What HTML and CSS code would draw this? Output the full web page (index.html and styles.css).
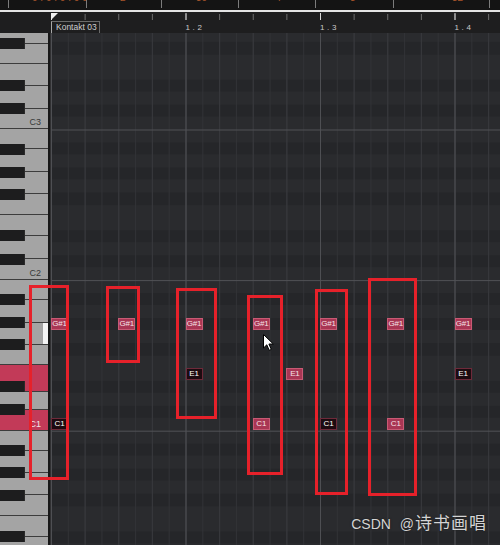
FILE: index.html
```html
<!DOCTYPE html>
<html>
<head>
<meta charset="utf-8">
<link rel="stylesheet" href="styles.css">
</head>
<body>
<div class="app">
  <div class="topbar">
    <div class="tcell w9"></div>
    <div class="tcell w78"><span class="otext p23">0 . 0 . 0 . 0 0</span></div>
    <div class="tcell w75"><span class="otext p33">2</span></div>
    <div class="tcell w77"><span class="otext p34">30</span></div>
    <div class="tcell w77"><span class="otext p38">7</span></div>
    <div class="tcell w78"><span class="otext p34">3</span></div>
    <div class="tcell w96"><span class="otext p58">32</span></div>
    <div class="tcell last"></div>
  </div>
  <div class="hline"></div>
  <div class="ruler">
    <div class="ruler-left"></div>
    <div class="ruler-track">
      <div class="beat first">
        <div class="marker"></div>
        <div class="part-label">Kontakt 03</div>
      </div>
      <div class="beat"><span class="beat-num">1 . 2</span></div>
      <div class="beat"><span class="beat-num">1 . 3</span></div>
      <div class="beat"><span class="beat-num">1 . 4</span></div>
    </div>
  </div>
  <div class="main">
    <div class="keyboard">
      <div class="wk k-top"></div>
      <div class="wk k-f"></div>
      <div class="wk k-e"></div>
      <div class="wk k-d"></div>
      <div class="wk k-c"><span>C3</span></div>
      <div class="wk k-b"></div>
      <div class="wk k-a"></div>
      <div class="wk k-g"></div>
      <div class="wk k-f"></div>
      <div class="wk k-e"></div>
      <div class="wk k-d"></div>
      <div class="wk k-c"><span>C2</span></div>
      <div class="wk k-b"></div>
      <div class="wk k-a"></div>
      <div class="wk k-g"></div>
      <div class="wk k-f"></div>
      <div class="wk k-e1 pink"></div>
      <div class="wk k-d1"></div>
      <div class="wk k-c pink"><span>C1</span></div>
      <div class="wk k-b"></div>
      <div class="wk k-a"></div>
      <div class="wk k-g"></div>
      <div class="wk k-f"></div>
      <div class="wk k-e"></div>
      <div class="wk k-d"></div>

      <div class="bk" style="top:5px"></div>
      <div class="bk" style="top:47px"></div>
      <div class="bk" style="top:70px"></div>
      <div class="bk" style="top:111px"></div>
      <div class="bk" style="top:134px"></div>
      <div class="bk" style="top:156px"></div>
      <div class="bk" style="top:197px"></div>
      <div class="bk" style="top:221px"></div>
      <div class="bk" style="top:261px"></div>
      <div class="bk" style="top:284px"></div>
      <div class="bk" style="top:306px"></div>
      <div class="bk" style="top:348px"></div>
      <div class="bk" style="top:371px"></div>
      <div class="bk" style="top:412px"></div>
      <div class="bk" style="top:434px"></div>
      <div class="bk" style="top:457px"></div>
      <div class="bk" style="top:498px"></div>

      <div class="key-indicator"></div>
    </div>
    <div class="divider"></div>
    <div class="grid">
      <div class="note lit r-gs" style="left:0px">G#1</div>
      <div class="note lit r-gs" style="left:67.25px">G#1</div>
      <div class="note lit r-gs" style="left:134.5px">G#1</div>
      <div class="note lit r-gs" style="left:201.75px">G#1</div>
      <div class="note lit r-gs" style="left:269px">G#1</div>
      <div class="note lit r-gs" style="left:336.25px">G#1</div>
      <div class="note lit r-gs" style="left:403.5px">G#1</div>

      <div class="note dark r-e" style="left:134.5px">E1</div>
      <div class="note lit r-e" style="left:235.4px">E1</div>
      <div class="note dark r-e" style="left:403.5px">E1</div>

      <div class="note dark r-c" style="left:0px">C1</div>
      <div class="note lit r-c" style="left:201.75px">C1</div>
      <div class="note dark r-c" style="left:269px">C1</div>
      <div class="note lit r-c" style="left:336.25px">C1</div>

      <svg class="cursor" width="12" height="18" viewBox="0 0 12 18">
        <path d="M0.5 0.5 L0.5 14 L3.8 10.8 L6.2 16.3 L8.3 15.4 L5.9 10 L10.3 10 Z" fill="#ffffff" stroke="#000000" stroke-width="1" stroke-linejoin="miter"/>
      </svg>
    </div>

    <div class="anno" style="left:29px;top:252px;width:40px;height:195px"></div>
    <div class="anno" style="left:106px;top:253px;width:34px;height:77px"></div>
    <div class="anno" style="left:176px;top:255px;width:41px;height:131px"></div>
    <div class="anno" style="left:247px;top:262px;width:36px;height:180px"></div>
    <div class="anno" style="left:315px;top:256px;width:33px;height:206px"></div>
    <div class="anno" style="left:368px;top:245px;width:49px;height:218px"></div>

    <div class="watermark"><span class="wm-lat">CSDN @</span><span class="wm-cjk">诗书画唱</span></div>
  </div>
</div>
</body>
</html>
```

FILE: styles.css
```css
* { box-sizing: border-box; margin: 0; padding: 0; }

html, body {
  width: 500px;
  height: 545px;
  overflow: hidden;
  background: #1a1a1a;
}

body {
  font-family: "Liberation Sans", Arial, sans-serif;
}

.app {
  display: flex;
  flex-direction: column;
  width: 500px;
  height: 545px;
}

/* ---------- top transport strip ---------- */
.topbar {
  display: flex;
  flex: none;
  height: 10px;
  background: #141414;
  overflow: hidden;
}

.tcell {
  flex: none;
  height: 8px;
  overflow: hidden;
  border-right: 1px solid #7c7c7c;
}

.tcell.last { flex: 1; border-right: none; }
.w9 { width: 9px; }
.w75 { width: 75px; }
.w77 { width: 77px; }
.w78 { width: 78px; }
.w96 { width: 96px; }

.otext {
  display: block;
  margin-top: -7px;
  font-size: 10px;
  line-height: 10px;
  color: #a8552b;
  white-space: nowrap;
}

.p23 { padding-left: 23px; }
.p33 { padding-left: 33px; }
.p34 { padding-left: 34px; }
.p38 { padding-left: 38px; }
.p58 { padding-left: 58px; }

.hline {
  flex: none;
  height: 2px;
  background: #e4e4e4;
}

/* ---------- ruler ---------- */
.ruler {
  flex: none;
  display: flex;
  height: 21px;
  background: #1e1e1f;
}

.ruler-left {
  flex: none;
  width: 51px;
}

.ruler-track {
  flex: 1;
  display: flex;
  background-image:
    linear-gradient(to right, #d8d8d8 0 1px, transparent 1px),
    linear-gradient(to right, #6c6c6c 0 1px, transparent 1px);
  background-size: 134.5px 7px, 33.625px 6px;
  background-position: 0 1px, 0 2px;
  background-repeat: repeat-x, repeat-x;
}

.beat {
  flex: none;
  width: 134.5px;
  padding-top: 11px;
}

.beat-num {
  display: block;
  font-size: 8px;
  line-height: 9px;
  color: #cacaca;
  letter-spacing: 0.2px;
}

.beat.first {
  display: flex;
  flex-direction: column;
  padding-top: 1px;
}

.marker {
  width: 0;
  height: 0;
  border-top: 7px solid #f0f0f0;
  border-right: 7px solid transparent;
}

.part-label {
  margin-top: 1px;
  width: 49px;
  height: 12px;
  border: 1px solid #6a6a6a;
  border-left-color: #a8a8a8;
  border-bottom: none;
  padding-left: 4px;
  font-size: 8.5px;
  line-height: 11px;
  color: #cfcfcf;
  white-space: nowrap;
}

/* ---------- main editor ---------- */
.main {
  flex: 1;
  display: flex;
  position: relative;
  overflow: hidden;
}

.keyboard {
  flex: none;
  width: 48px;
  position: relative;
  display: flex;
  flex-direction: column;
  background: #a4a4a4;
  overflow: hidden;
}

.wk {
  flex: none;
  display: flex;
  justify-content: flex-end;
  align-items: flex-end;
  padding-right: 7px;
  padding-bottom: 1px;
  border-bottom: 1px solid #3c3c3c;
  font-size: 9px;
  line-height: 10px;
  color: #383838;
}

.k-top { height: 10.6px; }
.k-b { height: 20px; }
.k-a { height: 22.5px; }
.k-g { height: 22.2px; }
.k-f { height: 20.4px; }
.k-e { height: 21.7px; }
.k-d { height: 23px; }
.k-c { height: 20.8px; }
.k-e1 { height: 26.8px; }
.k-d1 { height: 17.9px; }

.wk.pink {
  background: #c23a58;
  color: #f3e4e7;
}

.bk {
  position: absolute;
  left: 0;
  width: 25px;
  height: 11px;
  background: #1d1d1e;
  border-right: 1px solid #2a2a2a;
}

.key-indicator {
  position: absolute;
  left: 43px;
  top: 290px;
  width: 5px;
  height: 21px;
  background: #f4f4f4;
}

.divider {
  flex: none;
  width: 3px;
  background: #171717;
  border-right: 1px solid #303032;
}

.grid {
  flex: 1;
  position: relative;
  background-color: #28292c;
  background-image:
    linear-gradient(to bottom, #505155 0 1px, transparent 1px),
    linear-gradient(to right, #4e4f53 0 1px, transparent 1px),
    linear-gradient(to right, #37383c 0 1px, transparent 1px),
    linear-gradient(to right, #313236 0 1px, transparent 1px),
    linear-gradient(to bottom,
      #2a2b2e 0 12.55px,
      #252629 12.55px 25.1px,
      #2a2b2e 25.1px 37.65px,
      #252629 37.65px 50.2px,
      #2a2b2e 50.2px 62.75px,
      #252629 62.75px 75.3px,
      #2a2b2e 75.3px 100.4px,
      #252629 100.4px 112.95px,
      #2a2b2e 112.95px 125.5px,
      #252629 125.5px 138.05px,
      #2a2b2e 138.05px 150.6px);
  background-size:
    100% 150.6px,
    134.5px 100%,
    33.625px 100%,
    16.8125px 100%,
    100% 150.6px;
  background-position:
    0 96.5px,
    0 0,
    0 0,
    0 0,
    0 96.5px;
}

/* ---------- notes ---------- */
.note {
  position: absolute;
  width: 17px;
  height: 12px;
  font-size: 8px;
  line-height: 10px;
  text-align: center;
  white-space: nowrap;
  letter-spacing: -0.2px;
}

.note.lit {
  background: #a93654;
  border: 1px solid #c85a74;
  color: #f6e2e7;
}

.note.dark {
  background: #1d0b10;
  border: 1px solid #6e2a3a;
  color: #ffffff;
}

.r-gs { top: 285px; }
.r-e { top: 335px; }
.r-c { top: 385px; }

.cursor {
  position: absolute;
  left: 212px;
  top: 301px;
}

/* ---------- annotations ---------- */
.anno {
  position: absolute;
  border: 3px solid #e6212a;
}

.watermark {
  position: absolute;
  right: 13px;
  bottom: 11px;
  display: flex;
  align-items: baseline;
  color: #d4d4d4;
  text-shadow: 0 0 2px rgba(0, 0, 0, 0.6);
  white-space: nowrap;
}

.wm-lat {
  font-family: "Liberation Sans", Arial, sans-serif;
  font-size: 14px;
  word-spacing: 5px;
  margin-right: 1px;
}

.wm-cjk {
  font-family: "Noto Sans CJK SC", sans-serif;
  font-size: 17px;
  letter-spacing: 1px;
}
```
